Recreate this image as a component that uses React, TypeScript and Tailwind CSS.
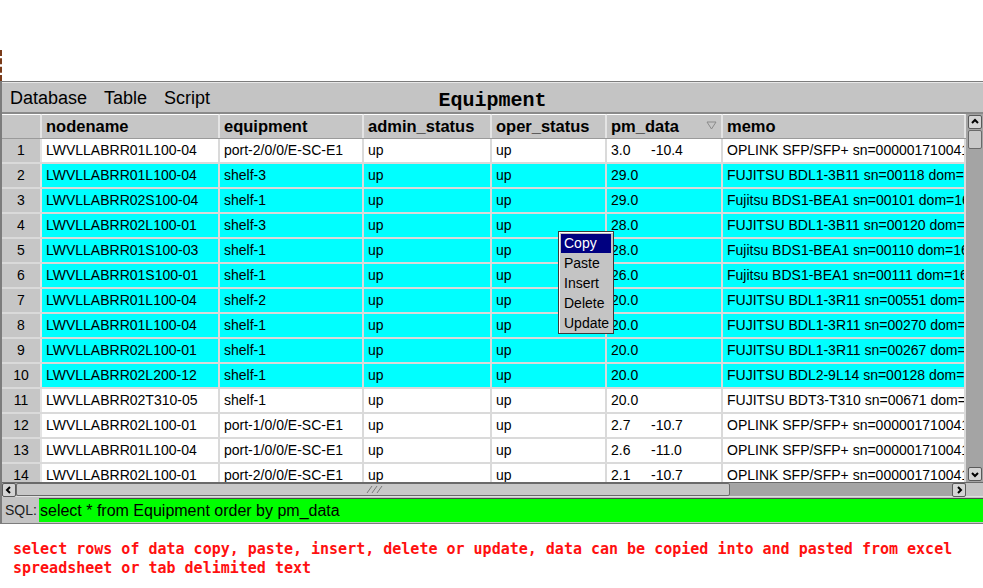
import React from "react";

interface ROW {
  node: string;
  equip: string;
  pm: [string, string?];
  memo: string;
  hl: boolean;
}

const rows: ROW[] = [
  { node: "LWVLLABRR01L100-04", equip: "port-2/0/0/E-SC-E1", pm: ["3.0", "-10.4"], memo: "OPLINK SFP/SFP+ sn=000001710041234", hl: false },
  { node: "LWVLLABRR01L100-04", equip: "shelf-3", pm: ["29.0"], memo: "FUJITSU BDL1-3B11 sn=00118 dom=16.5.2", hl: true },
  { node: "LWVLLABRR02S100-04", equip: "shelf-1", pm: ["29.0"], memo: "Fujitsu BDS1-BEA1 sn=00101 dom=16.5.2", hl: true },
  { node: "LWVLLABRR02L100-01", equip: "shelf-3", pm: ["28.0"], memo: "FUJITSU BDL1-3B11 sn=00120 dom=16.5.2", hl: true },
  { node: "LWVLLABRR01S100-03", equip: "shelf-1", pm: ["28.0"], memo: "Fujitsu BDS1-BEA1 sn=00110 dom=16.5.2", hl: true },
  { node: "LWVLLABRR01S100-01", equip: "shelf-1", pm: ["26.0"], memo: "Fujitsu BDS1-BEA1 sn=00111 dom=16.5.2", hl: true },
  { node: "LWVLLABRR01L100-04", equip: "shelf-2", pm: ["20.0"], memo: "FUJITSU BDL1-3R11 sn=00551 dom=16.5.2", hl: true },
  { node: "LWVLLABRR01L100-04", equip: "shelf-1", pm: ["20.0"], memo: "FUJITSU BDL1-3R11 sn=00270 dom=16.5.2", hl: true },
  { node: "LWVLLABRR02L100-01", equip: "shelf-1", pm: ["20.0"], memo: "FUJITSU BDL1-3R11 sn=00267 dom=16.5.2", hl: true },
  { node: "LWVLLABRR02L200-12", equip: "shelf-1", pm: ["20.0"], memo: "FUJITSU BDL2-9L14 sn=00128 dom=16.5.2", hl: true },
  { node: "LWVLLABRR02T310-05", equip: "shelf-1", pm: ["20.0"], memo: "FUJITSU BDT3-T310 sn=00671 dom=16.5.2", hl: false },
  { node: "LWVLLABRR02L100-01", equip: "port-1/0/0/E-SC-E1", pm: ["2.7", "-10.7"], memo: "OPLINK SFP/SFP+ sn=000001710041234", hl: false },
  { node: "LWVLLABRR01L100-04", equip: "port-1/0/0/E-SC-E1", pm: ["2.6", "-11.0"], memo: "OPLINK SFP/SFP+ sn=000001710041234", hl: false },
  { node: "LWVLLABRR02L100-01", equip: "port-2/0/0/E-SC-E1", pm: ["2.1", "-10.7"], memo: "OPLINK SFP/SFP+ sn=000001710041234", hl: false },
];

const cell = "h-full shrink-0 border-r-2 border-[#dadada] pl-[4px] flex items-center overflow-hidden whitespace-nowrap";
const hcell =
  "h-full shrink-0 border-r-2 border-r-[#e4e4e4] border-t border-t-white pl-[4px] flex items-center overflow-hidden whitespace-nowrap font-bold text-[16.5px]";

function ScrollBtn({ dir }: { dir: "up" | "down" | "left" | "right" }) {
  const d = {
    up: "M3 7 L6 4 L9 7",
    down: "M3 5 L6 8 L9 5",
    left: "M7 3 L4 6 L7 9",
    right: "M5 3 L8 6 L5 9",
  }[dir];
  return (
    <div className="w-[14px] h-[14px] rounded-[2px] border border-[#5a5a5a] bg-[#d4d4d4] flex items-center justify-center shrink-0">
      <svg width="12" height="12" viewBox="0 0 12 12">
        <path d={d} fill="none" stroke="#000" strokeWidth="2" />
      </svg>
    </div>
  );
}

export default function App() {
  return (
    <div
      className="relative w-[983px] h-[588px] bg-white overflow-hidden text-black"
      style={{ fontFamily: '"Liberation Sans", Arial, sans-serif' }}
    >
      <div className="h-[81px] pt-[50px]">
        <div className="h-[31px] border-l-2 border-dashed border-[#7a3b1a]" />
      </div>

      <div className="border-l-2 border-t border-[#7c7c7c] bg-[#c4c4c4]">
        {/* menubar */}
        <div className="h-[32px] grid grid-cols-[1fr_auto_1fr] border-b-2 border-b-[#8a8a8a] border-t border-t-[#e8e8e8]">
          <div className="flex items-center gap-[17px] pl-[8px] text-[18px] pt-[1px]">
            <span>Database</span>
            <span>Table</span>
            <span>Script</span>
          </div>
          <div
            className="flex items-end pb-[2px] font-bold text-[20px] leading-[19px]"
            style={{ fontFamily: '"Liberation Mono", "Courier New", monospace' }}
          >
            Equipment
          </div>
          <div />
        </div>

        {/* table */}
        <div className="flex h-[368px]">
          <div className="w-[964px] overflow-hidden text-[14px]">
            <div className="flex h-[25px] bg-[#c6c6c6] border-b border-[#9a9a9a]">
              <div className={`${hcell} w-[40px]`} />
              <div className={`${hcell} w-[178px]`}>nodename</div>
              <div className={`${hcell} w-[144px]`}>equipment</div>
              <div className={`${hcell} w-[128px]`}>admin_status</div>
              <div className={`${hcell} w-[115px]`}>oper_status</div>
              <div className={`${hcell} w-[116px] relative`}>
                pm_data
                <svg className="absolute right-[4px] top-[6px]" width="11" height="9" viewBox="0 0 11 9">
                  <path d="M1 1 L10 1 L5.5 8 Z" fill="none" stroke="#8a8a8a" strokeWidth="1" />
                </svg>
              </div>
              <div className={`${hcell} w-[243px] border-r-0`}>memo</div>
            </div>
            {rows.map((r, i) => (
              <div key={i} className="flex h-[25px] border-b-2 border-[#dadada]">
                <div className="h-full w-[40px] shrink-0 bg-[#c6c6c6] border-r-2 border-[#e4e4e4] flex items-center justify-center">
                  {i + 1}
                </div>
                <div className={`flex h-full ${r.hl ? "bg-[#00ffff]" : "bg-white"}`}>
                  <div className={`${cell} w-[178px]`}>{r.node}</div>
                  <div className={`${cell} w-[144px]`}>{r.equip}</div>
                  <div className={`${cell} w-[128px]`}>up</div>
                  <div className={`${cell} w-[115px]`}>up</div>
                  <div className={`${cell} w-[116px]`}>
                    <span className="w-[40px]">{r.pm[0]}</span>
                    {r.pm[1] && <span>{r.pm[1]}</span>}
                  </div>
                  <div className={`${cell} w-[243px] border-r-0`}>{r.memo}</div>
                </div>
              </div>
            ))}
          </div>
          {/* vertical scrollbar */}
          <div className="w-[17px] bg-[#a4a4a4] flex flex-col items-center pt-[1px] pb-[1px]">
            <ScrollBtn dir="up" />
            <div className="w-[14px] h-[19px] mt-[1px] rounded-[2px] border border-[#6a6a6a] bg-[#c8c8c8]" />
            <div className="flex-1" />
            <ScrollBtn dir="down" />
          </div>
        </div>

        {/* horizontal scrollbar */}
        <div className="flex h-[14px] border-t border-[#6a6a6a]">
          <div className="flex-1 flex bg-[#a4a4a4]">
            <ScrollBtn dir="left" />
            <div className="w-[714px] h-[13px] rounded-[2px] border border-[#6a6a6a] bg-[#c8c8c8] flex items-center justify-center">
              <svg width="18" height="9" viewBox="0 0 18 9" className="ml-[4px]">
                <path d="M1 8 L6 1 M6 8 L11 1 M11 8 L16 1" stroke="#7a7a7a" strokeWidth="1" />
              </svg>
            </div>
            <div className="flex-1" />
            <ScrollBtn dir="right" />
          </div>
          <div className="w-[17px] bg-[#c4c4c4]" />
        </div>

        {/* sql bar */}
        <div className="flex items-center h-[28px] border-t border-[#e0e0e0] border-b border-b-[#7c7c7c]">
          <span className="pl-[3px] w-[37px] text-[14px] text-[#202020]">SQL:</span>
          <div className="flex-1 h-[24px] bg-[#00ff00] border-t border-[#4a4a4a] flex items-center text-[16px] pl-[1px]">
            select * from Equipment order by pm_data
          </div>
        </div>
      </div>

      <div
        className="mt-[16px] pl-[13px] text-[15px] leading-[19px] font-bold text-[#ff1010]"
        style={{ fontFamily: '"DejaVu Sans Mono", "Liberation Mono", monospace' }}
      >
        select rows of data copy, paste, insert, delete or update, data can be copied into and pasted from excel
        spreadsheet or tab delimited text
      </div>

      {/* context menu */}
      <div className="absolute left-[558px] top-[231px] w-[56px] h-[103px] bg-[#c4c4c4] border border-[#3a3a3a] p-[2px] text-[14px] shadow-[inset_1px_1px_0_#ffffff]">
        <div className="h-[19px] bg-[#000080] text-white pl-[3px] flex items-center">Copy</div>
        <div className="h-[20px] pl-[3px] flex items-center">Paste</div>
        <div className="h-[20px] pl-[3px] flex items-center">Insert</div>
        <div className="h-[20px] pl-[3px] flex items-center">Delete</div>
        <div className="h-[20px] pl-[3px] flex items-center">Update</div>
      </div>
    </div>
  );
}
